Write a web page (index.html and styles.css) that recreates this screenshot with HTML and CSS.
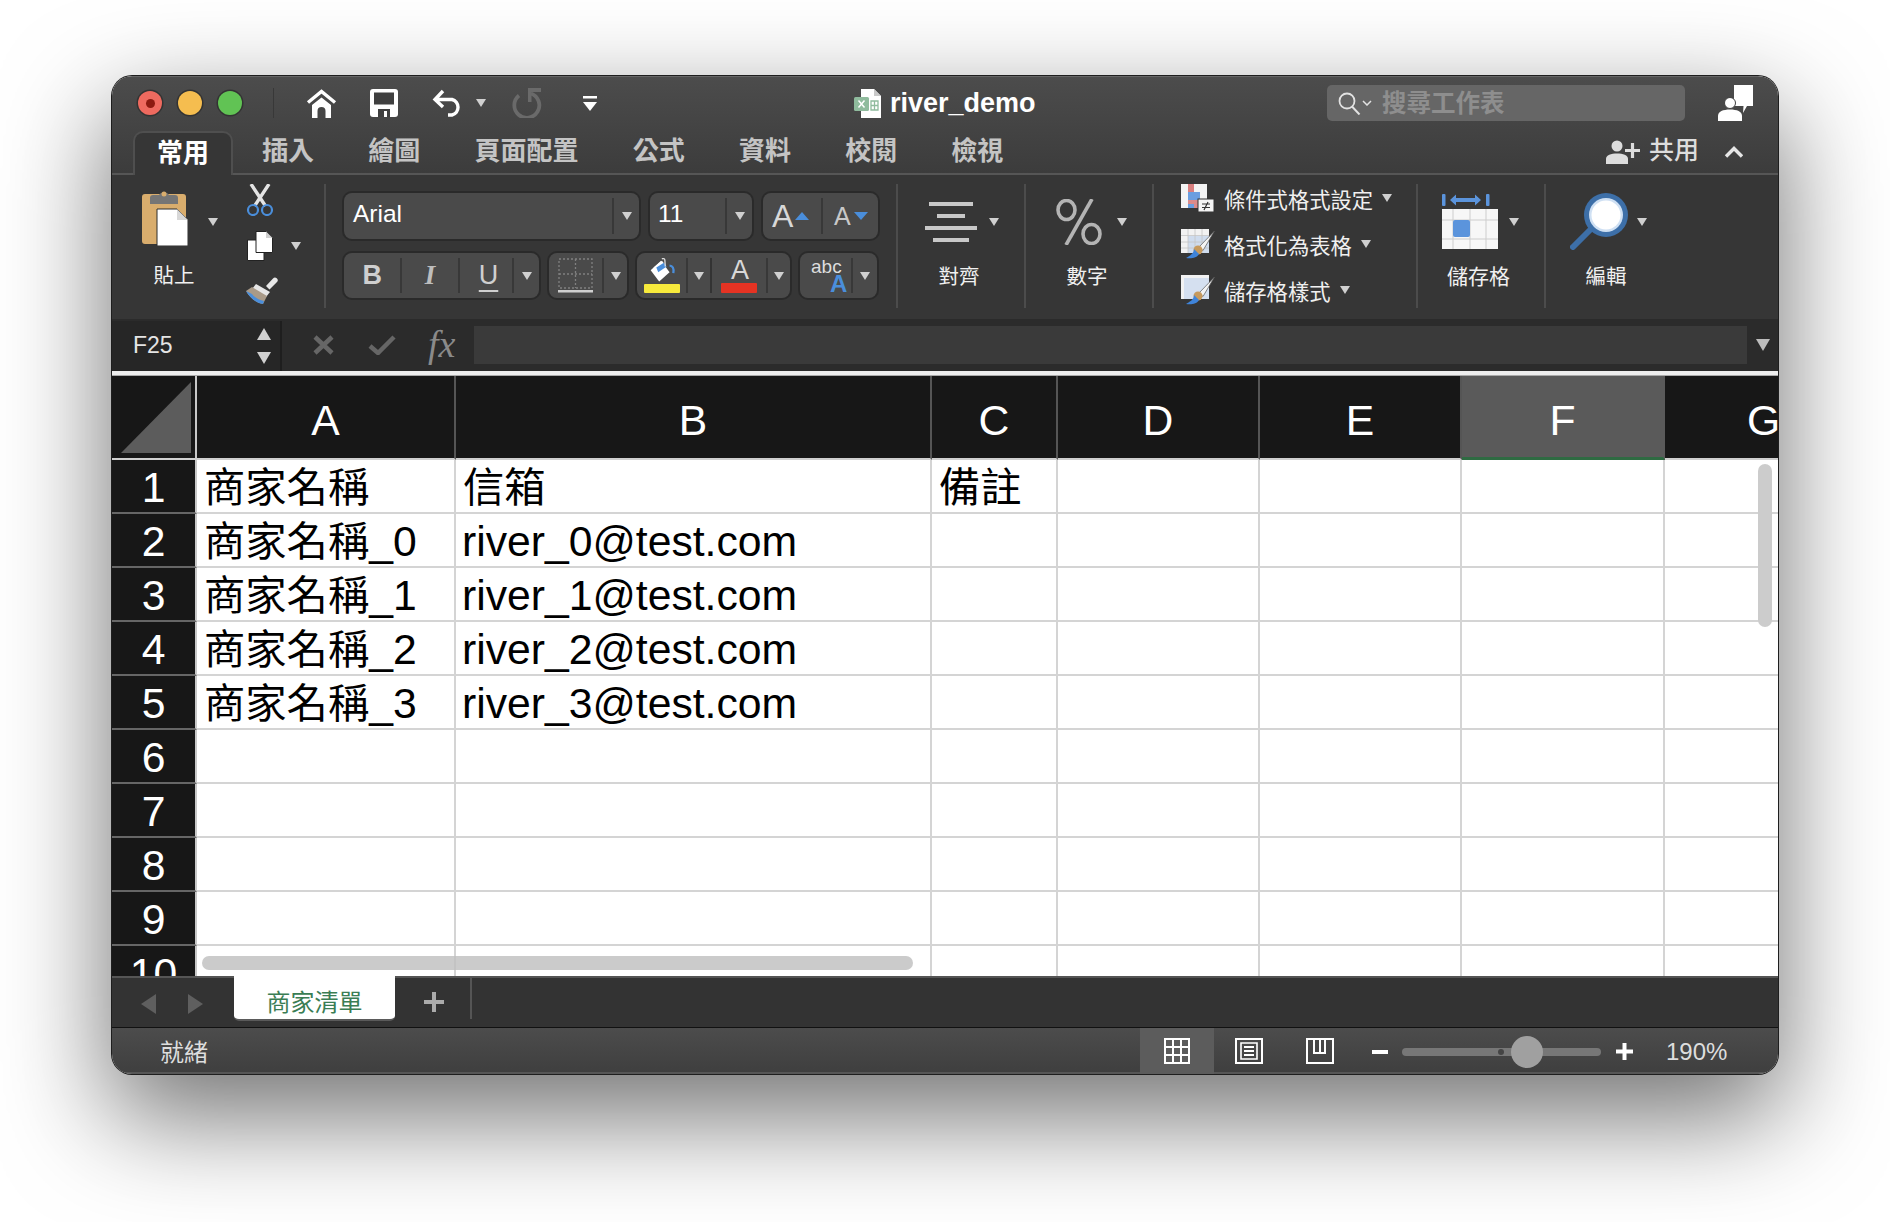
FILE: index.html
```html
<!DOCTYPE html>
<html>
<head>
  <meta charset="utf-8">
  <title>river_demo</title>
  <link rel="stylesheet" href="styles.css">
</head>
<body>
<div class="window">

  <div class="head">
    <div class="titlebar">
      <span class="light red"><i></i></span>
      <span class="light yellow"></span>
      <span class="light green"></span>
      <span class="qa-sep"></span>
      <svg class="qa-home" width="31" height="29" viewBox="0 0 31 29"><path d="M2 13.5 15.5 2.5 29 13.5" fill="none" stroke="#fff" stroke-width="3.4"/><path d="M6 16 15.5 8.500 25 16V29H19.500V22a4 4 0 0 0-8 0V29H6Z" fill="#fff"/></svg>
      <svg class="qa-save" width="28" height="28" viewBox="0 0 28 28"><path d="M3 0H25a3 3 0 0 1 3 3V25a3 3 0 0 1-3 3H3a3 3 0 0 1-3-3V3a3 3 0 0 1 3-3Z" fill="#fff"/><rect x="4" y="3.500" width="20" height="12" fill="#3f3f3f"/><rect x="8" y="20" width="12" height="8" fill="#3f3f3f"/><rect x="14" y="22" width="3" height="6" fill="#fff"/></svg>
      <svg class="qa-undo" width="31" height="28" viewBox="0 0 31 28"><path d="M11 2 3 10.500 11 18M3 10.500H20a8 8 0 0 1 0 15.500H16" fill="none" stroke="#fff" stroke-width="3.4"/></svg>
      <span class="tri qa-undo-tri"></span>
      <svg class="qa-redo" width="32" height="30" viewBox="0 0 32 30"><path d="M9 7.500A12.500 12.500 0 1 0 21 5.500" fill="none" stroke="#6a6a6a" stroke-width="3.800"/><path d="M18 0V14L21.500 14V4H31V0Z" fill="#6a6a6a"/></svg>
      <svg class="qa-more" width="14" height="15" viewBox="0 0 14 15"><rect width="14" height="2.500" fill="#fff"/><path d="M0 6H14L7 15Z" fill="#fff"/></svg>
      <svg class="doc-icon" width="27" height="29" viewBox="0 0 27 29"><path d="M7 0H20L27 7V29H7Z" fill="#fff"/><path d="M20 0V7H27Z" fill="#c9c9c9"/><rect x="0" y="8" width="15" height="14" rx="1.500" fill="#8fbb9d"/><path d="M4.500 11.500 10.500 18.500M10.500 11.500 4.500 18.500" stroke="#fff" stroke-width="1.500"/><path d="M17 12h7v9h-7ZM20.500 12v9M17 16.500h7" fill="none" stroke="#8fbb9d" stroke-width="1.300"/></svg>
      <span class="doc-title">river_demo</span>
      <div class="search">
        <svg width="23" height="23" viewBox="0 0 23 23"><circle cx="9" cy="9" r="7.500" fill="none" stroke="#e2e2e2" stroke-width="1.800"/><path d="M14 14.500 21.500 22.500" stroke="#e2e2e2" stroke-width="2"/></svg>
        <svg class="search-chev" width="10" height="6" viewBox="0 0 10 6"><path d="M1 1 5 5 9 1" fill="none" stroke="#e2e2e2" stroke-width="1.500"/></svg>
        <span class="search-text">搜尋工作表</span>
      </div>
      <svg class="feedback" width="35" height="36" viewBox="0 0 35 36"><path d="M16 0H35V21H29L25 28 25.500 21H16Z" fill="#fff"/><circle cx="12" cy="18" r="5.500" fill="#fff" stroke="#3f3f3f" stroke-width="1"/><path d="M0 36V31C0 26.500 5 24.500 12 24.500S24 26.500 24 31V36Z" fill="#fff"/></svg>
    </div>
    <div class="tabrow">
      <span class="tab active">常用</span>
      <span class="tab">插入</span>
      <span class="tab">繪圖</span>
      <span class="tab">頁面配置</span>
      <span class="tab">公式</span>
      <span class="tab">資料</span>
      <span class="tab">校閱</span>
      <span class="tab">檢視</span>
      <div class="share">
        <svg width="34" height="24" viewBox="0 0 34 24"><circle cx="11" cy="6" r="5.500" fill="#ddd"/><path d="M0 24V19C0 15 5 13.500 11 13.500S22 15 22 19V24Z" fill="#ddd"/><path d="M19 10.500H34M26.500 3V18" stroke="#ddd" stroke-width="3.200"/></svg>
        <span class="share-text">共用</span>
        <svg class="collapse" width="20" height="12" viewBox="0 0 20 12"><path d="M2 10.500 10 2.500 18 10.500" fill="none" stroke="#e6e6e6" stroke-width="3.400"/></svg>
      </div>
    </div>
  </div>

  <div class="ribbon">
    <div class="grp clipboard">
      <div class="paste">
        <div class="paste-top">
          <svg width="46" height="58" viewBox="0 0 46 58"><rect x="0" y="6" width="44" height="50" rx="3" fill="#d9ad6d"/><path d="M8 16V10a3 3 0 0 1 3-3h6a6 6 0 0 1 10 0h6a3 3 0 0 1 3 3v6Z" fill="#757575"/><circle cx="22" cy="6" r="2.500" fill="#d9ad6d"/><path d="M15 21H35L46 32V58H15Z" fill="#fff" stroke="#2c2c2c" stroke-width="1"/><path d="M35 21V32H46Z" fill="#d8d8d8"/></svg>
          <span class="tri"></span>
        </div>
        <span class="label">貼上</span>
      </div>
      <div class="clip-tools">
        <svg width="28" height="32" viewBox="0 0 28 32"><path d="M5 0 19.500 22M23 0 8.500 22" stroke="#e4e4e4" stroke-width="3.400"/><circle cx="7" cy="26" r="5" fill="none" stroke="#4a8edb" stroke-width="2.200"/><circle cx="21" cy="26" r="5" fill="none" stroke="#4a8edb" stroke-width="2.200"/></svg>
        <div class="copy-row">
          <svg width="26" height="30" viewBox="0 0 26 30"><path d="M.500 9H17V29.500H.500Z" fill="#fff" stroke="#222"/><path d="M9 .500H19L25.500 7V21.500H9Z" fill="#fff" stroke="#222"/><path d="M19 .500V7H25.500Z" fill="#cfcfcf"/></svg>
          <span class="tri"></span>
        </div>
        <svg width="32" height="28" viewBox="0 0 32 28"><path d="M20 10 27 2.500a2.500 2.500 0 0 1 4 3.500L23.500 13.500Z" fill="#e8e8e8"/><path d="M10 8 24 16 20 21 6 13Z" fill="#e6e6e6"/><path d="M6 11 21 20 17 28C10 27 4 22 0 15Z" fill="#a99a88"/><path d="M0 15 6 18C8 21 13 24 18 25L17 28C10 27 4 22 0 15Z" fill="#4a8edb"/></svg>
      </div>
    </div>
    <span class="sep"></span>

    <div class="grp font">
      <div class="font-row first">
        <div class="box w-font">
          <span class="cell fontname">Arial</span>
          <span class="cell drop"><span class="tri"></span></span>
        </div>
        <div class="box w-size">
          <span class="cell fontsize">11</span>
          <span class="cell drop"><span class="tri"></span></span>
        </div>
        <div class="box w-grow">
          <span class="cell grow"><span class="big-a">A</span><span class="tri blue up"></span></span>
          <span class="cell shrink"><span class="small-a">A</span><span class="tri blue"></span></span>
        </div>
      </div>
      <div class="font-row">
        <div class="box w-biu">
          <span class="cell b">B</span>
          <span class="cell i">I</span>
          <span class="cell u"><span>U</span></span>
          <span class="cell drop"><span class="tri"></span></span>
        </div>
        <div class="box w-border">
          <span class="cell border-icon">
            <svg width="35" height="35" viewBox="0 0 35 35"><path d="M1 1H34V30H1ZM17.500 1V30M1 16H34" fill="none" stroke="#808080" stroke-width="1.300" stroke-dasharray="2 2"/><rect y="32" width="35" height="2.500" fill="#cfcfcf"/></svg>
          </span>
          <span class="cell drop"><span class="tri"></span></span>
        </div>
        <div class="box w-color">
          <span class="cell swatch-cell fill-cell">
            <svg width="28" height="26" viewBox="0 0 28 26"><path d="M2 13 13 3 22 15 11 25Z" fill="#fff"/><path d="M5 10 14 3 17 7 8 15Z" fill="#fff"/><path d="M8 10 16 5 19 9 10 15Z" fill="#4a8edb"/><path d="M14 1a1.800 1.800 0 0 1 3 1L17.500 9" fill="none" stroke="#ddd" stroke-width="1.400"/><path d="M22 8c3 0 5 3 4 8" fill="none" stroke="#4a8edb" stroke-width="2.400"/></svg>
            <i class="swatch yellow-bar"></i>
          </span>
          <span class="cell drop d-fill"><span class="tri"></span></span>
          <span class="cell swatch-cell color-cell">
            <span class="color-a">A</span>
            <i class="swatch red-bar"></i>
          </span>
          <span class="cell drop d-color"><span class="tri"></span></span>
        </div>
        <div class="box w-abc">
          <span class="cell abc"><span class="abc-small">abc</span><span class="abc-a">A</span></span>
          <span class="cell drop"><span class="tri"></span></span>
        </div>
      </div>
    </div>
    <span class="sep"></span>

    <div class="grp big w-align">
      <div class="big-top">
        <svg class="align-icon" width="52" height="40" viewBox="0 0 52 40"><rect x="4" width="44" height="4" fill="#c8c8c8"/><rect x="12" y="12" width="28" height="4" fill="#c8c8c8"/><rect y="24" width="52" height="4" fill="#c8c8c8"/><rect x="8" y="36" width="36" height="4" fill="#c8c8c8"/></svg>
        <span class="tri"></span>
      </div>
      <span class="label">對齊</span>
    </div>
    <span class="sep"></span>

    <div class="grp big w-num">
      <div class="big-top">
        <svg class="num-icon" width="46" height="46" viewBox="0 0 46 46"><ellipse cx="10.500" cy="11" rx="8.500" ry="9.500" fill="none" stroke="#b4b4b4" stroke-width="3.600"/><ellipse cx="35.500" cy="35" rx="8.500" ry="9.500" fill="none" stroke="#b4b4b4" stroke-width="3.600"/><path d="M36 0 10 46" stroke="#b4b4b4" stroke-width="3.600"/></svg>
        <span class="tri"></span>
      </div>
      <span class="label">數字</span>
    </div>
    <span class="sep"></span>

    <div class="grp styles">
      <div class="style-row">
        <svg width="34" height="28" viewBox="0 0 34 28"><rect width="26" height="24" fill="#f4f4f4"/><rect x="7" width="6" height="8" fill="#d97f7f"/><rect x="7" y="8" width="12" height="8" fill="#6a9ee0"/><rect x="7" y="16" width="17" height="8" fill="#d97f7f" opacity=".9"/><rect x="7" y="20" width="6" height="4" fill="#6a9ee0"/><rect x="17" y="15" width="16" height="13" fill="#f4f4f4" stroke="#333"/><path d="M21 20h8M21 23.500h8M27 18l-4 8" stroke="#333" stroke-width="1.200" fill="none"/></svg>
        <span class="style-text">條件式格式設定</span><span class="tri"></span>
      </div>
      <div class="style-row">
        <svg width="34" height="30" viewBox="0 0 34 30"><rect y="0" width="28" height="24" fill="#f2f2f2"/><rect x="7" y="7" width="21" height="17" fill="#cfdcee"/><path d="M0 6.500H28M0 13H28M0 19H28M7 0V24M14 0V24M21 0V24" stroke="#c4c4c4" stroke-width=".8"/><path d="M33.500 2 18 18 22 21.500Z" fill="#f4f4f4" stroke="#555" stroke-width=".7"/><circle cx="17" cy="21" r="4.500" fill="#c79a5d"/><path d="M13 20C13 25 8 27 5 29 10 30 16 29 18 25Z" fill="#3f84da"/></svg>
        <span class="style-text">格式化為表格</span><span class="tri"></span>
      </div>
      <div class="style-row">
        <svg width="34" height="30" viewBox="0 0 34 30"><rect y="0" width="28" height="24" fill="#f2f2f2"/><rect x="3" y="3" width="25" height="21" fill="#d5e0f0"/><path d="M33.500 2 18 18 22 21.500Z" fill="#f4f4f4" stroke="#555" stroke-width=".7"/><circle cx="17" cy="21" r="4.500" fill="#c79a5d"/><path d="M13 20C13 25 8 27 5 29 10 30 16 29 18 25Z" fill="#3f84da"/></svg>
        <span class="style-text">儲存格樣式</span><span class="tri"></span>
      </div>
    </div>
    <span class="sep"></span>

    <div class="grp big w-cells">
      <div class="big-top">
        <svg class="cells-icon" width="56" height="56" viewBox="0 0 56 56"><rect x="0" width="3.500" height="12" rx="1" fill="#5b94dc"/><rect x="44" width="3.500" height="12" rx="1" fill="#5b94dc"/><path d="M8 6 14 .500V4H33V.500L39 6 33 11.500V8H14V11.500Z" fill="#5b94dc"/><rect y="15" width="56" height="40" fill="#f7f7f7"/><path d="M0 26H56M0 45H56M11 15V55M28 15V55M44 15V55" stroke="#cdcdcd"/><rect x="11" y="26" width="17" height="17" rx="2" fill="#5b94dc"/></svg>
        <span class="tri"></span>
      </div>
      <span class="label">儲存格</span>
    </div>
    <span class="sep"></span>

    <div class="grp big w-edit">
      <div class="big-top">
        <svg class="edit-icon" width="58" height="57" viewBox="0 0 58 57"><path d="M20 37 3 54" stroke="#3d6fa8" stroke-width="6" stroke-linecap="round"/><circle cx="36" cy="22" r="22" fill="#3d6fa8"/><circle cx="36" cy="22" r="17" fill="#cfe0f3"/><circle cx="36" cy="22" r="14.500" fill="#fff"/></svg>
        <span class="tri"></span>
      </div>
      <span class="label">編輯</span>
    </div>
  </div>

  <div class="formula">
    <div class="namebox">
      <span class="name">F25</span>
      <span class="spin"><i class="tri up"></i><i class="tri"></i></span>
    </div>
    <svg class="f-x" width="21" height="20" viewBox="0 0 21 20"><path d="M2 2 19 18M19 2 2 18" stroke="#666" stroke-width="4.500"/></svg>
    <svg class="f-ok" width="28" height="20" viewBox="0 0 28 20"><path d="M2 11 10 18 26 2" fill="none" stroke="#666" stroke-width="4.500"/></svg>
    <span class="fx">fx</span>
    <div class="f-input"></div>
    <span class="tri f-drop"></span>
  </div>
  <div class="divider"></div>

  <div class="sheet">
    <table class="grid">
      <colgroup>
        <col class="c-rh"><col class="c-a"><col class="c-b"><col class="c-c"><col class="c-d"><col class="c-e"><col class="c-f"><col class="c-g">
      </colgroup>
      <thead>
        <tr>
          <th class="corner"><svg width="72" height="72" viewBox="0 0 72 72"><path d="M0 71 70 0V71Z" fill="#5c5c5c"/></svg></th>
          <th>A</th><th>B</th><th>C</th><th>D</th><th>E</th><th class="sel">F</th><th>G</th>
        </tr>
      </thead>
      <tbody>
        <tr><th>1</th><td><span class="zh">商家名稱</span></td><td><span class="zh">信箱</span></td><td><span class="zh">備註</span></td><td></td><td></td><td></td><td></td></tr>
        <tr><th>2</th><td><span class="zh">商家名稱</span>_0</td><td class="mail">river_0@test.com</td><td></td><td></td><td></td><td></td><td></td></tr>
        <tr><th>3</th><td><span class="zh">商家名稱</span>_1</td><td class="mail">river_1@test.com</td><td></td><td></td><td></td><td></td><td></td></tr>
        <tr><th>4</th><td><span class="zh">商家名稱</span>_2</td><td class="mail">river_2@test.com</td><td></td><td></td><td></td><td></td><td></td></tr>
        <tr><th>5</th><td><span class="zh">商家名稱</span>_3</td><td class="mail">river_3@test.com</td><td></td><td></td><td></td><td></td><td></td></tr>
        <tr><th>6</th><td></td><td></td><td></td><td></td><td></td><td></td><td></td></tr>
        <tr><th>7</th><td></td><td></td><td></td><td></td><td></td><td></td><td></td></tr>
        <tr><th>8</th><td></td><td></td><td></td><td></td><td></td><td></td><td></td></tr>
        <tr><th>9</th><td></td><td></td><td></td><td></td><td></td><td></td><td></td></tr>
        <tr><th>10</th><td></td><td></td><td></td><td></td><td></td><td></td><td></td></tr>
      </tbody>
    </table>
    <div class="thumb-v"></div>
    <div class="thumb-h"></div>
  </div>

  <div class="sheetbar">
    <span class="nav-left"></span>
    <span class="nav-right"></span>
    <span class="sheet-tab">商家清單</span>
    <svg class="add" width="20" height="20" viewBox="0 0 20 20"><path d="M0 10H20M10 0V20" stroke="#ababab" stroke-width="4"/></svg>
    <span class="bar-sep"></span>
  </div>

  <div class="status">
    <span class="ready">就緒</span>
    <div class="view active-view">
      <svg width="26" height="26" viewBox="0 0 26 26"><path d="M1 1H25V25H1ZM9 1V25M17 1V25M1 9H25M1 17H25" fill="none" stroke="#fff" stroke-width="2"/></svg>
    </div>
    <div class="view v-page">
      <svg width="28" height="26" viewBox="0 0 28 26"><path d="M1 1H27V25H1Z" fill="none" stroke="#fff" stroke-width="2"/><path d="M6 5H22V21H6Z" fill="none" stroke="#fff" stroke-width="1.600"/><path d="M9 9H19M9 13H19M9 17H19" stroke="#fff" stroke-width="1.800"/></svg>
    </div>
    <div class="view v-break">
      <svg width="28" height="26" viewBox="0 0 28 26"><path d="M1 1H27V25H1ZM8 1V15H19V1M14 1V15" fill="none" stroke="#fff" stroke-width="2"/></svg>
    </div>
    <span class="zoom-minus"></span>
    <div class="slider">
      <i class="slider-dot"></i>
      <i class="slider-thumb"></i>
    </div>
    <svg class="zoom-plus" width="17" height="17" viewBox="0 0 17 17"><path d="M0 8.500H17M8.500 0V17" stroke="#fff" stroke-width="4"/></svg>
    <span class="percent">190%</span>
  </div>

</div>
</body>
</html>
```

FILE: styles.css
```css
body {
  margin: 0;
  background: #fff;
  width: 1890px;
  height: 1222px;
  overflow: hidden;
  font-family: "Liberation Sans", "Noto Sans CJK TC", sans-serif;
  color: #ddd;
}
.window {
  margin: 76px 0 0 112px;
  width: 1666px;
  height: 998px;
  display: flex;
  flex-direction: column;
  border-radius: 20px;
  overflow: hidden;
  box-shadow: 0 0 0 1px #1e1e1e, 0 40px 105px 4px rgba(0, 0, 0, .55);
}

/* shared down arrow */
.tri {
  display: inline-block;
  flex: none;
  width: 0;
  height: 0;
  border-left: 5px solid transparent;
  border-right: 5px solid transparent;
  border-top: 8px solid #d0d0d0;
}
.tri.up {
  border-top: 0;
  border-bottom: 8px solid #d0d0d0;
}
.tri.blue { border-top-color: #4a8edb; border-left-width: 7px; border-right-width: 7px; }
.tri.blue.up { border-bottom-color: #4a8edb; }

/* title bar + tabs */
.head {
  height: 99px;
  box-sizing: border-box;
  background: linear-gradient(#4c4c4c, #3c3c3c);
  border-top: 1px solid #666;
  border-bottom: 2px solid #565656;
}
.titlebar {
  height: 52px;
  padding: 0 25px 0 26px;
  display: flex;
  align-items: center;
}
.light {
  width: 24px;
  height: 24px;
  border-radius: 50%;
  margin-right: 16px;
  box-shadow: 0 0 0 1.5px #333;
  display: flex;
  align-items: center;
  justify-content: center;
}
.light.red { background: #ee6a5f; }
.light.red i { width: 9px; height: 9px; border-radius: 50%; background: #8c1a10; }
.light.yellow { background: #f5bd4f; }
.light.green { background: #61c354; margin-right: 0; }
.qa-sep { width: 1px; height: 30px; background: #383838; margin-left: 31px; }
.qa-home { margin-left: 32px; }
.qa-save { margin-left: 33px; }
.qa-undo { margin-left: 34px; }
.qa-undo-tri { margin-left: 13px; }
.qa-redo { margin-left: 24px; }
.qa-more { margin-left: 41px; }
.doc-icon { margin-left: 257px; }
.doc-title {
  margin: 0 0 0 9px;
  font-size: 27px;
  font-weight: 700;
  color: #fff;
}
.search {
  margin-left: auto;
  width: 358px;
  height: 36px;
  box-sizing: border-box;
  padding-left: 11px;
  background: #666;
  border-radius: 5px;
  display: flex;
  align-items: center;
}
.search-chev { margin-left: 1px; }
.search-text {
  margin: -3px 0 0 10px;
  font-size: 24.500px;
  font-weight: 700;
  color: #8e8e8e;
}
.feedback { margin-left: 33px; }

.tabrow {
  height: 42px;
  padding: 2px 34px 0 18px;
  display: flex;
}
.tab {
  padding: 0 27.100px 3px;
  font-size: 26px;
  line-height: 40px;
  font-weight: 700;
  color: #c4c4c4;
  white-space: nowrap;
}
.tab.active {
  margin: 0 2px -2px 3px;
  padding: 0 22px;
  height: 44px;
  background: #363636;
  border: 2px solid #4f4f4f;
  border-bottom: 0;
  border-radius: 10px 10px 0 0;
  color: #fff;
}
.share {
  margin-left: auto;
  display: flex;
  align-items: center;
}
.share-text { margin: -8px 0 0 9px; font-size: 25px; color: #ddd; font-weight: 500; }
.collapse { margin-left: 25px; }

/* ribbon */
.ribbon {
  height: 144px;
  flex: none;
  background: #363636;
  display: flex;
}
.sep {
  flex: none;
  width: 2px;
  height: 124px;
  margin-top: 9px;
  background: #4c4c4c;
}
.grp { flex: none; box-sizing: border-box; }
.label {
  font-size: 20.500px;
  line-height: 28px;
  color: #f0f0f0;
  text-align: center;
  white-space: nowrap;
}
.clipboard {
  width: 212px;
  display: flex;
  padding: 9px 0 0 30px;
}
.paste { width: 76px; display: flex; flex-direction: column; }
.paste-top { height: 78px; display: flex; align-items: flex-start; padding-top: 4px; box-sizing: border-box; }
.paste-top .tri { margin: 30px 0 0 20px; }
.paste .label { margin: 0 0 0 2px; width: 60px; }
.clip-tools {
  margin-left: 28px;
  display: flex;
  flex-direction: column;
}
.copy-row { margin: 15px 0 15px 1px; display: flex; align-items: center; }
.copy-row .tri { margin-left: 18px; }

.font { width: 570px; padding: 18px 0 0 18px; }
.font-row { display: flex; height: 45px; gap: 10px; }
.font-row.first { margin-bottom: 14px; height: 46px; gap: 11px; }
.box {
  flex: none;
  display: flex;
  box-sizing: border-box;
  background: #4a4a4a;
  border-radius: 8px;
  box-shadow: 0 0 0 2px #2a2a2a;
  padding: 5px 0;
}
.cell {
  box-sizing: border-box;
  display: flex;
  align-items: center;
  justify-content: center;
  border-left: 2px solid #383838;
  color: #dcdcdc;
}
.cell:first-child { border-left: 0; }
.drop { width: 27px; }
.w-font { width: 295px; }
.w-size { width: 102px; }
.w-grow { width: 115px; }
.w-biu { width: 195px; }
.w-border { width: 78px; }
.w-color { width: 153px; }
.w-abc { width: 77px; }
.fontname { flex: 1; justify-content: flex-start; padding: 0 0 4px 9px; font-size: 24.500px; color: #fff; }
.fontsize { flex: 1; justify-content: flex-start; padding: 0 0 4px 8px; font-size: 24.500px; color: #fff; }
.grow { width: 58px; gap: 2px; justify-content: flex-start; padding-left: 9px; }
.shrink { flex: 1; gap: 3px; justify-content: flex-start; padding-left: 11px; }
.big-a { font-size: 32px; color: #d8d8d8; }
.small-a { font-size: 25px; color: #c8c8c8; }
.b { width: 57px; font: 700 27px "Liberation Sans", sans-serif; color: #cfcfcf; }
.i { width: 58px; font: italic 700 27px "Liberation Serif", serif; color: #bdbdbd; }
.u { width: 55px; padding-left: 5px; font-size: 27px; color: #cfcfcf; }
.u span { text-decoration: underline; text-underline-offset: 6px; }
.border-icon { width: 59px; }
.swatch-cell { flex-direction: column; justify-content: flex-end; }
.fill-cell { width: 49px; }
.color-cell { width: 56px; border-left: 2px solid #333; }
.d-fill { width: 24px; }
.d-color { flex: 1; }
.swatch { display: block; width: 36px; height: 10px; margin-top: 1px; border-radius: 1px; }
.yellow-bar { background: #f7ea3c; }
.red-bar { background: #e53323; }
.color-a { margin-left: 2px; font-size: 27px; line-height: 24px; color: #d8d8d8; }
.abc {
  width: 53px;
  flex-direction: column;
  align-items: flex-start;
  padding-left: 11px;
}
.abc-small { font-size: 19px; line-height: 16px; color: #ddd; }
.abc-a { margin-left: 19px; font-size: 24px; line-height: 18px; font-weight: 700; color: #4a8edb; }

.big {
  display: flex;
  flex-direction: column;
  align-items: center;
}
.big-top { position: relative; height: 88px; align-self: stretch; }
.big .label { width: 100%; }
.big-top svg { display: block; }
.big-top .tri { position: absolute; top: 43px; }
.w-align { width: 126px; }
.align-icon { margin: 27px 0 0 27px; }
.w-align .tri { left: 91px; }
.w-align .label { margin-left: -4px; }
.w-num { width: 126px; }
.num-icon { margin: 24px 0 0 30px; }
.w-num .tri { left: 91px; }
.w-num .label { margin-left: -4px; }
.styles { width: 262px; padding: 0 0 0 27px; }
.style-row { height: 46px; display: flex; align-items: center; }
.style-row svg { flex: none; width: 34px; }
.style-text { margin: 0 9px 0 9px; font-size: 21.300px; color: #f0f0f0; white-space: nowrap; }
.w-cells { width: 126px; }
.cells-icon { margin: 19px 0 0 24px; }
.w-cells .tri { left: 91px; }
.w-cells .label { margin-left: 29px; width: 62px; font-size: 21px; align-self: flex-start; }
.w-edit { width: 231px; }
.edit-icon { margin: 18px 0 0 24px; }
.w-edit .tri { left: 91px; }
.w-edit .label { align-self: flex-start; margin-left: 38px; width: 44px; }

/* formula bar */
.formula {
  height: 52px;
  flex: none;
  box-sizing: border-box;
  background: #2b2b2b;
  display: flex;
  align-items: center;
}
.namebox {
  width: 170px;
  height: 50px;
  margin-top: 2px;
  box-sizing: border-box;
  padding: 0 9px 0 21px;
  background: #262626;
  border-right: 2px solid #1e1e1e;
  display: flex;
  align-items: center;
  justify-content: space-between;
}
.name { margin-top: -2px; font-size: 23px; color: #e4e4e4; }
.spin { display: flex; flex-direction: column; gap: 12px; }
.spin .tri { border-left-width: 7px; border-right-width: 7px; border-top-width: 12px; }
.spin .tri.up { border-top-width: 0; border-bottom-width: 12px; }
.f-x { margin-left: 31px; }
.f-ok { margin-left: 34px; }
.fx {
  margin: -2px 0 0 32px;
  width: 30px;
  font: italic 38px "Liberation Serif", serif;
  color: #8a8a8a;
}
.f-input {
  margin: 0 0 0 16px;
  width: 1273px;
  height: 38px;
  background: #3a3a3a;
}
.f-drop {
  margin: 0 0 0 9px;
  border-left-width: 7px;
  border-right-width: 7px;
  border-top-width: 12px;
  border-top-color: #bcbcbc;
}
.divider {
  height: 5px;
  flex: none;
  box-sizing: border-box;
  background: #eee;
  border-bottom: 1px solid #aaa;
}

/* sheet */
.sheet {
  height: 600px;
  flex: none;
  position: relative;
  overflow: hidden;
  background: #fff;
}
.grid {
  table-layout: fixed;
  width: 1752px;
  border-collapse: separate;
  border-spacing: 0;
  font-family: "Liberation Sans", "Noto Sans CJK TC", sans-serif;
  font-size: 42.700px;
  color: #000;
}
.c-rh { width: 85px; }
.c-a { width: 259px; }
.c-b { width: 476px; }
.c-c { width: 126px; }
.c-d { width: 202px; }
.c-e { width: 202px; }
.c-f { width: 203px; }
.c-g { width: 199px; }
.grid th, .grid td {
  box-sizing: border-box;
  height: 54px;
  padding: 2px 0 0;
  line-height: 44px;
  white-space: nowrap;
  overflow: hidden;
}
.grid td {
  padding-left: 7px;
  border-right: 2px solid #d4d4d4;
  border-bottom: 2px solid #d4d4d4;
}
.grid td.mail { padding-left: 6px; }
.zh { font-size: 41.300px; }
.grid th {
  background: #171717;
  color: #fff;
  font-weight: 400;
  border-right: 2px solid #c8c8c8;
  border-bottom: 2px solid #666;
}
.grid thead th {
  height: 84px;
  padding-top: 5px;
  border-right: 2px solid #555;
  border-bottom: 2px solid #d0d0d0;
}
.grid thead th.corner {
  text-align: right;
  vertical-align: bottom;
  border-right-color: #c8c8c8;
  line-height: 0;
  padding: 0 2px 4px 0;
}
.grid thead th.sel {
  padding-top: 6px;
  background: #5a5a5a;
  border-bottom: 3px solid #2e6b42;
  border-right-color: #5a5a5a;
}
.thumb-v {
  position: absolute;
  left: 1646px;
  top: 88px;
  width: 14px;
  height: 163px;
  border-radius: 7px;
  background: #ccc;
}
.thumb-h {
  position: absolute;
  left: 90px;
  top: 580px;
  width: 711px;
  height: 14px;
  border-radius: 7px;
  background: rgba(190, 190, 190, .8);
}

/* sheet tabs */
.sheetbar {
  height: 52px;
  flex: none;
  box-sizing: border-box;
  background: #333;
  border-top: 2px solid #555;
  border-bottom: 1px solid #111;
  display: flex;
  align-items: flex-start;
}
.nav-left, .nav-right {
  width: 0;
  height: 0;
  margin-top: 16px;
  border-top: 10px solid transparent;
  border-bottom: 10px solid transparent;
}
.nav-left { margin-left: 29px; border-right: 15px solid #5f5f5f; }
.nav-right { margin-left: 32px; border-left: 15px solid #5f5f5f; }
.sheet-tab {
  margin: -2px 0 0 31px;
  width: 161px;
  height: 45px;
  box-sizing: border-box;
  background: #fff;
  border-bottom: 2px solid #5a5a5a;
  border-radius: 0 0 5px 5px;
  text-align: center;
  font-size: 24px;
  line-height: 54px;
  color: #3a7d54;
}
.add { margin: 14px 0 0 29px; }
.bar-sep { width: 2px; height: 41px; margin: 0 0 0 26px; background: #555; }

/* status bar */
.status {
  height: 46px;
  flex: none;
  background: linear-gradient(#4c4c4c, #3f3f3f);
  border-bottom: 2px solid #565656;
  box-sizing: border-box;
  display: flex;
  align-items: center;
}
.ready { margin-left: 48px; width: 980px; font-size: 24px; color: #ddd; }
.view {
  width: 70px;
  height: 46px;
  margin-top: 2px;
  display: flex;
  align-items: center;
  justify-content: center;
  flex: none;
}
.active-view { width: 74px; background: #5c5c5c; }
.v-page { width: 70px; }
.v-break { width: 72px; }
.zoom-minus { width: 16px; height: 4px; margin: 3px 0 0 16px; background: #fff; }
.slider {
  position: relative;
  margin: 3px 0 0 14px;
  width: 199px;
  height: 8px;
  border-radius: 4px;
  background: #777;
}
.slider-dot {
  position: absolute;
  left: 96px;
  top: 1px;
  width: 6px;
  height: 6px;
  border-radius: 50%;
  background: #444;
}
.slider-thumb {
  position: absolute;
  left: 109px;
  top: -12px;
  width: 32px;
  height: 32px;
  border-radius: 50%;
  background: #a0a0a0;
}
.zoom-plus { margin: 3px 0 0 15px; }
.percent { margin: 3px 0 0 33px; font-size: 24px; color: #ddd; }
```
